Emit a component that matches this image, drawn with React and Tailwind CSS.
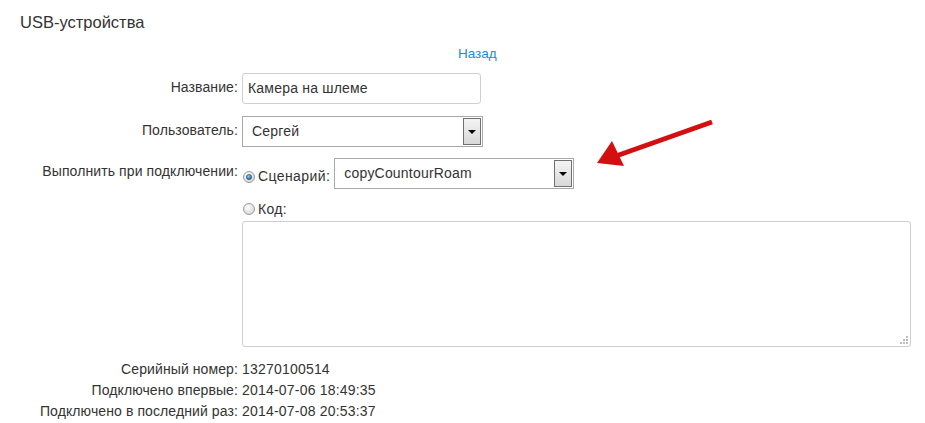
import React from 'react';

const font = { fontFamily: '"Liberation Sans", Arial, sans-serif' };

const SelectBox = ({ value, width }) => (
  <div className={`flex h-[31px] items-stretch border border-[#a9a9a9] bg-white ${width}`}>
    <div className="flex flex-1 items-center pl-[9px] text-[14px] tracking-[0.2px] text-[#333]">{value}</div>
    <div className="my-px mr-px flex w-[18px] items-center justify-center border border-[#707070] bg-gradient-to-b from-[#f4f4f4] to-[#d8d8d8]">
      <div className="h-0 w-0 border-x-[4px] border-t-[4px] border-x-transparent border-t-black" />
    </div>
  </div>
);

const Radio = ({ checked }) => (
  <svg width="12" height="12" viewBox="0 0 12 12" className="shrink-0">
    <defs>
      <radialGradient id={checked ? 'rc' : 'ru'} cx="0.4" cy="0.35" r="0.7">
        <stop offset="0" stopColor="#ffffff" />
        <stop offset="1" stopColor="#d4d4d4" />
      </radialGradient>
      <radialGradient id="dot" cx="0.4" cy="0.35" r="0.7">
        <stop offset="0" stopColor="#8fd0f5" />
        <stop offset="1" stopColor="#1d5f8f" />
      </radialGradient>
    </defs>
    <circle cx="6" cy="6" r="5.5" fill={`url(#${checked ? 'rc' : 'ru'})`} stroke="#9a9a9a" />
    {checked && <circle cx="6" cy="6" r="2.6" fill="url(#dot)" stroke="#1b3f5c" strokeWidth="0.6" />}
  </svg>
);

const Label = ({ children, className = '' }) => (
  <div className={`w-[238px] shrink-0 text-right text-[14px] tracking-[0.1px] text-[#333] ${className}`}>{children}</div>
);

export default function App() {
  return (
    <div className="relative min-h-[423px] w-[925px] bg-white" style={font}>
      <div className="pl-[20px] pt-[11px] text-[16.5px] leading-[22px] text-[#333]">USB-устройства</div>

      <div className="mt-[13px] pl-[458px] text-[13.5px] leading-[16px] text-[#1a8ad6]">Назад</div>

      <div className="mt-[11px] flex flex-col">
        <div className="flex items-start gap-[4px]">
          <Label className="pt-[4px]">Название:</Label>
          <div className="flex h-[31px] w-[239px] items-center rounded-[3px] border border-[#cfcfcf] pl-[5px] text-[14px] tracking-[0.2px] text-[#333]">
            Камера на шлеме
          </div>
        </div>

        <div className="mt-[12px] flex items-start gap-[4px]">
          <Label className="pt-[4px]">Пользователь:</Label>
          <SelectBox value="Сергей" width="w-[241px]" />
        </div>

        <div className="mt-[11px] flex items-start gap-[4px]">
          <Label className="pt-[3px]">Выполнить при подключении:</Label>
          <div className="flex flex-col">
            <div className="flex items-center">
              <div className="flex items-center gap-[3px] pl-px pt-[6px]">
                <Radio checked />
                <span className="text-[14px] tracking-[0.4px] text-[#333]">Сценарий:</span>
              </div>
              <div className="ml-[4px]">
                <SelectBox value="copyCountourRoam" width="w-[240px]" />
              </div>
            </div>
            <div className="mt-[12px] flex items-center gap-[3px] pl-px">
              <Radio />
              <span className="text-[14px] leading-[16px] tracking-[0.3px] text-[#333]">Код:</span>
            </div>
            <div className="relative mt-[4px] h-[126px] w-[669px] rounded-[3px] border border-[#cfcfcf]">
              <svg className="absolute bottom-[2px] right-[2px]" width="9" height="9" viewBox="0 0 9 9">
                <g fill="#bbb">
                  <rect x="7" y="1" width="2" height="2" />
                  <rect x="4" y="4" width="2" height="2" />
                  <rect x="7" y="4" width="2" height="2" />
                  <rect x="1" y="7" width="2" height="2" />
                  <rect x="4" y="7" width="2" height="2" />
                  <rect x="7" y="7" width="2" height="2" />
                </g>
              </svg>
            </div>
          </div>
        </div>

        <div className="mt-[12px] flex flex-col text-[14px] leading-[21px] text-[#333]">
          <div className="flex gap-[4px]">
            <Label>Серийный номер:</Label>
            <span className="tracking-[0.2px]">13270100514</span>
          </div>
          <div className="flex gap-[4px]">
            <Label>Подключено впервые:</Label>
            <span className="tracking-[0.2px]">2014-07-06 18:49:35</span>
          </div>
          <div className="flex gap-[4px]">
            <Label>Подключено в последний раз:</Label>
            <span className="tracking-[0.2px]">2014-07-08 20:53:37</span>
          </div>
        </div>
      </div>

      <svg className="absolute left-[590px] top-[112px]" width="130" height="60" viewBox="0 0 130 60">
        <line x1="122" y1="10" x2="26" y2="44" stroke="#d40f0f" strokeWidth="5" />
        <polygon points="7,51 22,29 34,54" fill="#d40f0f" />
      </svg>
    </div>
  );
}
